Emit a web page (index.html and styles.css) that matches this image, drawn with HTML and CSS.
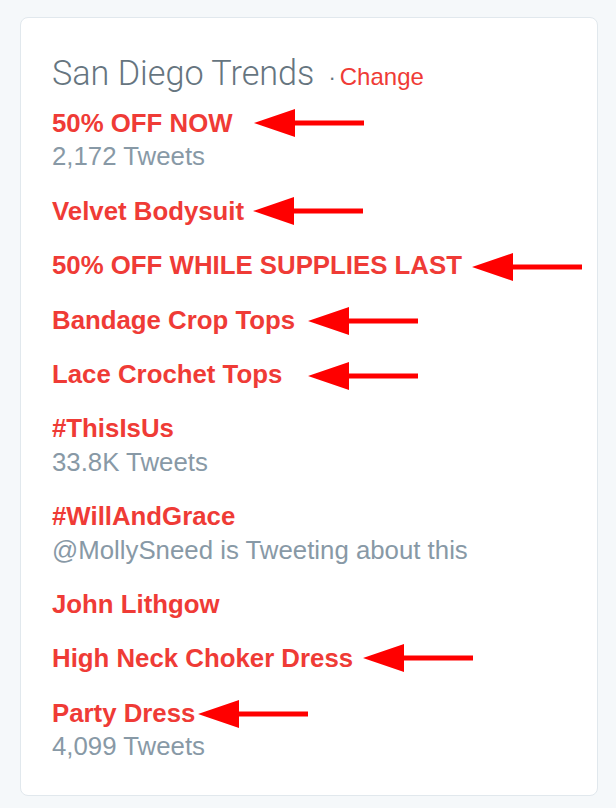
FILE: index.html
```html
<!DOCTYPE html>
<html lang="en">
<head>
<meta charset="utf-8">
<title>San Diego Trends</title>
<link rel="stylesheet" href="styles.css">
</head>
<body>
<section class="card">
  <h2 class="head"><span class="head-title">San Diego Trends</span><span class="head-dot">·</span><a class="head-change" href="#">Change</a></h2>
  <ul class="trends">
    <li class="trend"><span class="trend-name">50% OFF NOW</span><span class="trend-meta">2,172 Tweets</span></li>
    <li class="trend"><span class="trend-name">Velvet Bodysuit</span></li>
    <li class="trend"><span class="trend-name">50% OFF WHILE SUPPLIES LAST</span></li>
    <li class="trend"><span class="trend-name">Bandage Crop Tops</span></li>
    <li class="trend"><span class="trend-name">Lace Crochet Tops</span></li>
    <li class="trend"><span class="trend-name">#ThisIsUs</span><span class="trend-meta">33.8K Tweets</span></li>
    <li class="trend"><span class="trend-name">#WillAndGrace</span><span class="trend-meta">@MollySneed is Tweeting about this</span></li>
    <li class="trend"><span class="trend-name">John Lithgow</span></li>
    <li class="trend"><span class="trend-name">High Neck Choker Dress</span></li>
    <li class="trend"><span class="trend-name">Party Dress</span><span class="trend-meta">4,099 Tweets</span></li>
  </ul>
  <svg class="arrow arrow-1" viewBox="0 0 110 28" aria-hidden="true"><path d="M0 14 L41 0 L41 11.5 L110 11.5 L110 16.5 L41 16.5 L41 28 Z"/></svg>
  <svg class="arrow arrow-2" viewBox="0 0 110 28" aria-hidden="true"><path d="M0 14 L41 0 L41 11.5 L110 11.5 L110 16.5 L41 16.5 L41 28 Z"/></svg>
  <svg class="arrow arrow-3" viewBox="0 0 110 28" aria-hidden="true"><path d="M0 14 L41 0 L41 11.5 L110 11.5 L110 16.5 L41 16.5 L41 28 Z"/></svg>
  <svg class="arrow arrow-4" viewBox="0 0 110 28" aria-hidden="true"><path d="M0 14 L41 0 L41 11.5 L110 11.5 L110 16.5 L41 16.5 L41 28 Z"/></svg>
  <svg class="arrow arrow-5" viewBox="0 0 110 28" aria-hidden="true"><path d="M0 14 L41 0 L41 11.5 L110 11.5 L110 16.5 L41 16.5 L41 28 Z"/></svg>
  <svg class="arrow arrow-6" viewBox="0 0 110 28" aria-hidden="true"><path d="M0 14 L41 0 L41 11.5 L110 11.5 L110 16.5 L41 16.5 L41 28 Z"/></svg>
  <svg class="arrow arrow-7" viewBox="0 0 110 28" aria-hidden="true"><path d="M0 14 L41 0 L41 11.5 L110 11.5 L110 16.5 L41 16.5 L41 28 Z"/></svg>
</section>
</body>
</html>
```

FILE: styles.css
```css
html, body {
  margin: 0;
  padding: 0;
}

body {
  background: #f5f8fa;
  font-family: "Liberation Sans", Arial, sans-serif;
  padding: 17px 18px 0 20px;
  height: 808px;
  box-sizing: border-box;
}

.card {
  position: relative;
  box-sizing: border-box;
  width: 578px;
  height: 779px;
  background: #ffffff;
  border: 1px solid #e1e8ed;
  border-radius: 8px;
  padding: 35px 20px 0 31px;
}

.head {
  margin: 0;
  height: 40px;
  line-height: 40px;
  font-weight: normal;
  white-space: nowrap;
}

.head-title {
  font-family: Roboto, "Liberation Sans", sans-serif;
  font-weight: 300;
  font-size: 34.2px;
  color: #66757f;
}

.head-dot {
  font-size: 22px;
  color: #66757f;
  margin: 0 4px 0 14px;
}

.head-change {
  font-size: 24px;
  color: #ef3b36;
  text-decoration: none;
}

.trends {
  list-style: none;
  margin: 14px 0 0;
  padding: 0;
  display: flex;
  flex-direction: column;
  gap: 21px;
}

.trend {
  display: flex;
  flex-direction: column;
}

.trend-name {
  font-size: 25.8px;
  line-height: 33.4px;
  font-weight: bold;
  color: #ef3b36;
}

.trend-meta {
  font-size: 25.8px;
  line-height: 33.4px;
  color: #8899a6;
}

.arrow {
  position: absolute;
  width: 110px;
  height: 28px;
  fill: #ff0000;
}

.arrow-1 { left: 233px; top: 91px; }
.arrow-2 { left: 232px; top: 179px; }
.arrow-3 { left: 451px; top: 235px; }
.arrow-4 { left: 287px; top: 289px; }
.arrow-5 { left: 287px; top: 344px; }
.arrow-6 { left: 342px; top: 626px; }
.arrow-7 { left: 177px; top: 682px; }
```
